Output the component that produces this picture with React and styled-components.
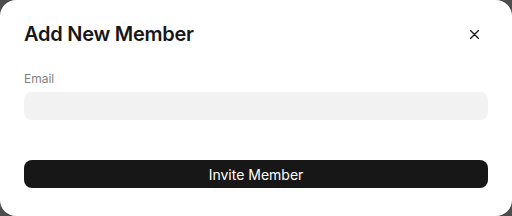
import styled, { createGlobalStyle } from "styled-components";

const GlobalStyle = createGlobalStyle`
    html, body {
        margin: 0;
        padding: 0;
        background-color: #4d4d4d;
    }
    * {
        box-sizing: border-box;
    }
`

const Modal = styled.div`
    width: 512px;
    height: 216px;
    background-color: #ffffff;
    border-radius: 16px;
    padding: 20px 24px 28px 24px;
    font-family: Inter, "Noto Sans", sans-serif;
    display: flex;
    flex-direction: column;
`

const Header = styled.div`
    display: flex;
    align-items: center;
    justify-content: space-between;
    height: 28px;
`

const Title = styled.h2`
    margin: 0;
    font-size: 20px;
    line-height: 28px;
    font-weight: 600;
    color: #171717;
    letter-spacing: -0.25px;
`

const CloseButton = styled.button`
    border: none;
    background: none;
    padding: 0;
    width: 16px;
    height: 16px;
    margin-right: 6px;
    display: flex;
    align-items: center;
    justify-content: center;
    color: #171717;
    cursor: pointer;
`

const Field = styled.div`
    display: flex;
    flex-direction: column;
    gap: 5px;
    margin-top: 23px;
`

const Label = styled.label`
    font-size: 12px;
    line-height: 16px;
    color: #7f7f7f;
`

const Input = styled.input`
    height: 28px;
    border: none;
    border-radius: 8px;
    background-color: #f2f2f2;
    padding: 0 12px;
    font-family: inherit;
    font-size: 14px;
    outline: none;
`

const SubmitButton = styled.button`
    margin-top: 40px;
    height: 28px;
    border: none;
    border-radius: 8px;
    background-color: #171717;
    color: #ffffff;
    font-family: inherit;
    font-size: 14px;
    font-weight: 400;
    cursor: pointer;
`

export default function App(){
    return(
        <>
            <GlobalStyle />
            <Modal>
                <Header>
                    <Title>Add New Member</Title>
                    <CloseButton aria-label="Close">
                        <svg width="9" height="9" viewBox="0 0 9 9">
                            <path d="M0.5 0.5L8.5 8.5M8.5 0.5L0.5 8.5" stroke="currentColor" strokeWidth="1.3" strokeLinecap="round" />
                        </svg>
                    </CloseButton>
                </Header>
                <Field>
                    <Label>Email</Label>
                    <Input type="email" />
                </Field>
                <SubmitButton>Invite Member</SubmitButton>
            </Modal>
        </>
    )
}
